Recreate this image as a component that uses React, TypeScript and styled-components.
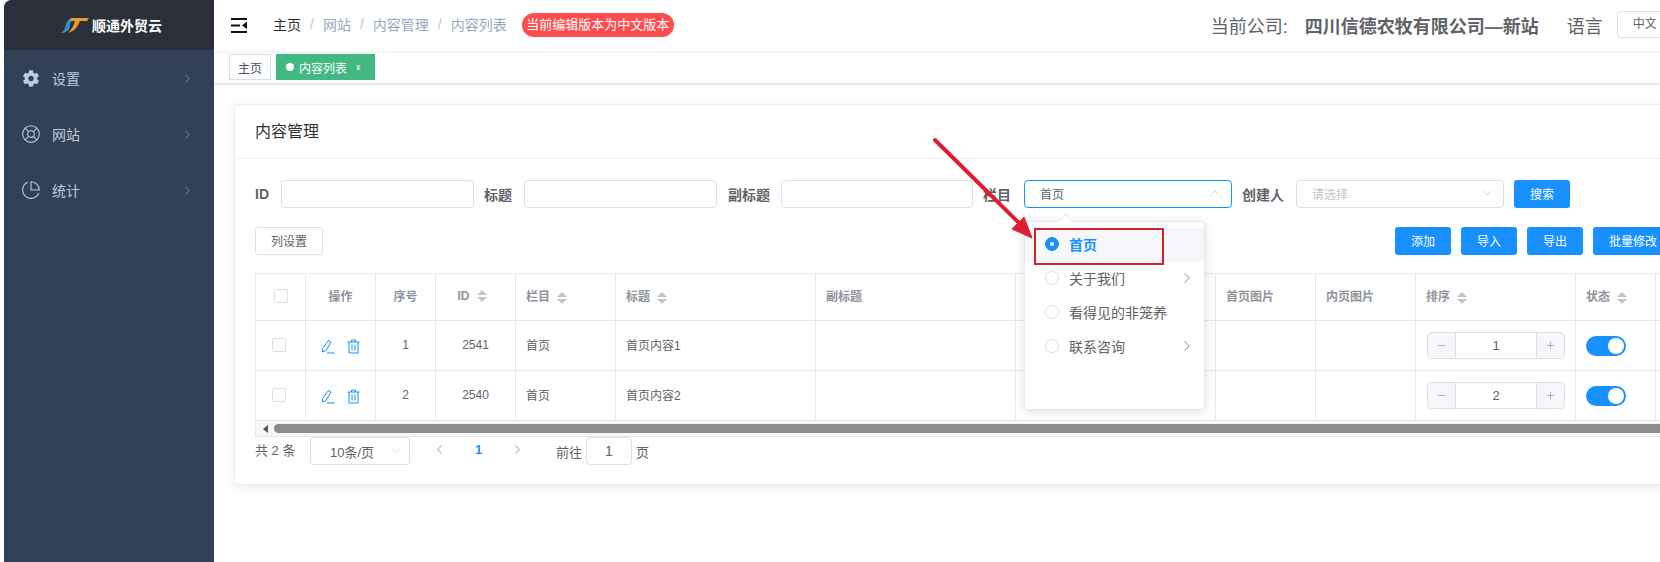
import styled, { createGlobalStyle } from "styled-components";
import { ChevronDown, ChevronRight, ChevronLeft, ChevronUp, LifeBuoy, Minus, Plus } from "lucide-react";
import { FaCog } from "react-icons/fa";
import { FiPieChart } from "react-icons/fi";

const GlobalStyle = createGlobalStyle`
	html, body {
		margin: 0;
		width: 1660px;
		height: 562px;
		overflow: hidden;
		background: #fff;
		font-family: "Liberation Sans", "Noto Sans CJK SC", sans-serif;
		color: #606266;
	}
	* { box-sizing: border-box; }
`;

const Page = styled.div`
	position: relative;
	display: flex;
	width: 1660px;
	height: 562px;
	padding-left: 4px;
	overflow: hidden;
`;

const Sidebar = styled.aside`
	flex: 0 0 210px;
	background: #304156;
	border-top-left-radius: 8px;
	overflow: hidden;
`;
const Brand = styled.div`
	height: 50px;
	background: #2b2f3a;
	display: flex;
	align-items: center;
	padding-left: 56px;
	gap: 3px;
	color: #fff;
	font-size: 14px;
	font-weight: 700;
`;
const Menu = styled.nav`
	padding-top: 0;
`;
const MenuItem = styled.div`
	height: 56px;
	display: flex;
	align-items: center;
	padding-left: 17px;
	padding-right: 20px;
	color: #bfcbd9;
	font-size: 14px;
	gap: 11px;
	svg:first-child {
		flex: 0 0 20px;
	}
	span {
		flex: 1;
	}
`;

const Main = styled.main`
	flex: 0 0 1446px;
	overflow: hidden;
`;
const TopNav = styled.header`
	height: 50px;
	display: flex;
	align-items: center;
	padding-left: 17px;
	white-space: nowrap;
	> * {
		flex-shrink: 0;
	}
`;
const Breadcrumbs = styled.div`
	display: flex;
	align-items: center;
	margin-left: 25px;
	padding-bottom: 2px;
	font-size: 14px;
	color: #97a8be;
`;
const CrumbHome = styled.span`
	color: #303133;
`;
const CrumbSep = styled.span`
	color: #c0c4cc;
	margin: 0 9px;
`;
const VersionBadge = styled.span`
	margin-left: 15px;
	height: 24px;
	width: 152px;
	border-radius: 12px;
	background: #ff4d4f;
	color: #fff;
	font-size: 13px;
	line-height: 23px;
	text-align: center;
`;
const Company = styled.div`
	margin-left: 537px;
	display: flex;
	align-items: center;
	padding-bottom: 1px;
	font-size: 18px;
	color: #606266;
`;
const CompanyName = styled.strong`
	margin-left: 17px;
	margin-right: 28px;
`;
const LangSelect = styled.div`
	margin-left: 14px;
	width: 90px;
	height: 27px;
	border: 1px solid #dcdfe6;
	border-radius: 4px;
	font-size: 12px;
	line-height: 25px;
	padding-left: 15px;
`;

const TagBar = styled.div`
	margin-top: 2px;
	height: 31px;
	display: flex;
	align-items: flex-start;
	gap: 5px;
	padding: 1px 0 0 15px;
	box-shadow: 0 1px 3px rgba(0, 0, 0, 0.18);
	border-top: 1px solid #f4f4f4;
`;
const Tag = styled.div<{ $active?: boolean }>`
	height: 26px;
	display: flex;
	align-items: center;
	padding: 0 ${(p) => (p.$active ? "13px 0 9px" : "8px")};
	font-size: 12px;
	border: 1px solid ${(p) => (p.$active ? "#42b983" : "#d8dce5")};
	background: ${(p) => (p.$active ? "#42b983" : "#fff")};
	color: ${(p) => (p.$active ? "#fff" : "#495060")};
`;
const TagDot = styled.i`
	width: 8px;
	height: 8px;
	border-radius: 50%;
	background: #fff;
	margin-right: 5px;
`;
const TagClose = styled.span`
	margin-left: 9px;
	font-size: 9px;
`;

const Card = styled.section`
	margin: 21px 0 0 20px;
	width: 1460px;
	height: 381px;
	background: #fff;
	border: 1px solid #ebeef5;
	border-radius: 4px;
	box-shadow: 0 2px 12px rgba(0, 0, 0, 0.08);
`;
const CardHeader = styled.div`
	height: 54px;
	padding: 0 0 3px 20px;
	display: flex;
	align-items: center;
	font-size: 16px;
	color: #303133;
	border-bottom: 1px solid #ebeef5;
`;
const CardBody = styled.div`
	padding: 21px 20px 0;
`;
const FilterRow = styled.div`
	display: flex;
	align-items: center;
	height: 28px;
`;
const FieldLabel = styled.label<{ $gap: number; $before?: number }>`
	font-size: 14px;
	font-weight: 700;
	color: #606266;
	margin-left: ${(p) => p.$before ?? 0}px;
	margin-right: ${(p) => p.$gap}px;
	white-space: nowrap;
`;
const TextInput = styled.div<{ $width: number; $gap: number }>`
	width: ${(p) => p.$width}px;
	height: 28px;
	margin-right: ${(p) => p.$gap}px;
	border: 1px solid #dcdfe6;
	border-radius: 4px;
	background: #fff;
`;
const SelectBox = styled.div<{ $width: number; $open?: boolean }>`
	position: relative;
	width: ${(p) => p.$width}px;
	height: 28px;
	display: flex;
	align-items: center;
	justify-content: space-between;
	padding: 0 8px 2px 15px;
	border: 1px solid ${(p) => (p.$open ? "#1890ff" : "#dcdfe6")};
	border-radius: 4px;
	font-size: 12px;
	color: ${(p) => (p.$open ? "#606266" : "#c0c4cc")};
	svg {
		color: #c0c4cc;
	}
`;
const PrimaryButton = styled.button<{ $width?: number; $before?: number }>`
	width: ${(p) => p.$width ?? 56}px;
	height: 28px;
	flex-shrink: 0;
	margin-left: ${(p) => p.$before ?? 0}px;
	padding: 0 0 2px;
	border: 0;
	border-radius: 3px;
	background: #1890ff;
	color: #fff;
	font-family: inherit;
	font-size: 12px;
`;
const ToolRow = styled.div`
	display: flex;
	justify-content: space-between;
	margin-top: 19px;
`;
const PlainButton = styled.button`
	width: 68px;
	height: 28px;
	padding: 0 0 2px;
	border: 1px solid #dcdfe6;
	border-radius: 3px;
	background: #fff;
	color: #606266;
	font-family: inherit;
	font-size: 12px;
`;
const ButtonGroup = styled.div`
	display: flex;
	gap: 10px;
`;

const TableWrap = styled.div`
	margin-top: 18px;
`;
const Table = styled.table`
	width: 100%;
	table-layout: fixed;
	border-collapse: collapse;
	font-size: 12px;
	border: 1px solid #e4e7ed;
	color: #606266;
`;
const Th = styled.th<{ $center?: boolean; $shift?: boolean }>`
	height: 47px;
	padding: 0 ${(p) => (p.$shift ? "17px" : "10px")} 3px 10px;
	border: 1px solid #e6e8ee;
	color: #909399;
	font-weight: 700;
	text-align: ${(p) => (p.$center ? "center" : "left")};
	white-space: nowrap;
`;
const Td = styled.td<{ $center?: boolean }>`
	height: 50px;
	padding: 0 10px 2px;
	border: 1px solid #e6e8ee;
	text-align: ${(p) => (p.$center ? "center" : "left")};
	white-space: nowrap;
`;
const CheckBox = styled.span<{ $nudge?: number }>`
	display: inline-block;
	width: 14px;
	height: 14px;
	vertical-align: middle;
	border: 1px solid #dcdfe6;
	border-radius: 2px;
	margin-right: ${(p) => p.$nudge ?? 0}px;
`;
const SortCaret = styled.span`
	display: inline-flex;
	flex-direction: column;
	gap: 2px;
	margin-left: 7px;
	vertical-align: middle;
	&::before,
	&::after {
		content: "";
		width: 0;
		height: 0;
		border-left: 5px solid transparent;
		border-right: 5px solid transparent;
	}
	&::before {
		border-bottom: 5px solid #c0c4cc;
	}
	&::after {
		border-top: 5px solid #c0c4cc;
	}
`;
const ActionIcons = styled.div`
	display: flex;
	justify-content: center;
	gap: 12px;
	padding-top: 4px;
`;
const Stepper = styled.div`
	width: 138px;
	height: 27px;
	display: flex;
	border: 1px solid #dcdfe6;
	border-radius: 4px;
	overflow: hidden;
	margin: 2px 0 0 1px;
`;
const StepButton = styled.div`
	flex: 0 0 28px;
	display: flex;
	align-items: center;
	justify-content: center;
	background: #f5f7fa;
	color: #606266;
	&:first-child {
		border-right: 1px solid #dcdfe6;
	}
	&:last-child {
		border-left: 1px solid #dcdfe6;
	}
`;
const StepValue = styled.div`
	flex: 1;
	text-align: center;
	font-size: 13px;
	line-height: 25px;
`;
const Switch = styled.span`
	display: block;
	position: relative;
	width: 40px;
	height: 20px;
	margin-top: 2px;
	border-radius: 10px;
	background: #1890ff;
	&::after {
		content: "";
		position: absolute;
		right: 2px;
		top: 2px;
		width: 16px;
		height: 16px;
		border-radius: 50%;
		background: #fff;
	}
`;

const ScrollBar = styled.div`
	height: 16px;
	display: flex;
	align-items: center;
	padding-left: 7px;
	gap: 6px;
	background: #f7f7f7;
	border: 1px solid #e4e7ed;
	border-top: 0;
	border-right: 0;
`;
const ScrollArrow = styled.i`
	width: 0;
	height: 0;
	border-top: 4px solid transparent;
	border-bottom: 4px solid transparent;
	border-right: 5px solid #555;
`;
const ScrollThumb = styled.div`
	flex: 1;
	height: 9px;
	border-radius: 5px;
	background: #8c8c8c;
`;

const Pager = styled.div`
	display: flex;
	align-items: center;
	height: 28px;
	margin-top: 0;
	font-size: 13px;
	color: #606266;
`;
const PagerTotal = styled.span`
	width: 55px;
	margin-top: -4px;
`;
const PagerSelect = styled(SelectBox)`
	padding: 0 7px 0 19px;
	color: #606266;
	font-size: 13px;
`;
const PagerNav = styled.div`
	width: 146px;
	display: flex;
	align-items: center;
	justify-content: space-between;
	padding: 0 31px 0 22px;
	margin-top: -3px;
	color: #c0c4cc;
`;
const PagerCurrent = styled.b`
	color: #1890ff;
`;
const JumpInput = styled.div`
	width: 46px;
	height: 28px;
	margin: 0 4px;
	border: 1px solid #dcdfe6;
	border-radius: 4px;
	text-align: center;
	font-size: 14px;
	line-height: 26px;
`;

const Dropdown = styled.div`
	position: absolute;
	left: -1px;
	top: 40px;
	width: 181px;
	height: 189px;
	padding-top: 6px;
	background: #fff;
	border: 1px solid #e4e7ed;
	border-radius: 4px;
	box-shadow: 0 2px 12px rgba(0, 0, 0, 0.12);
	z-index: 2;
	&::before {
		content: "";
		position: absolute;
		left: 35px;
		top: -6px;
		width: 10px;
		height: 10px;
		background: #fff;
		border-left: 1px solid #e4e7ed;
		border-top: 1px solid #e4e7ed;
		transform: rotate(45deg);
	}
`;
const DropItem = styled.div<{ $active?: boolean }>`
	position: relative;
	height: 34px;
	display: flex;
	align-items: center;
	padding: 0 8px 2px 20px;
	font-size: 14px;
	font-weight: ${(p) => (p.$active ? 700 : 400)};
	color: ${(p) => (p.$active ? "#1890ff" : "#606266")};
	background: ${(p) => (p.$active ? "#f5f7fa" : "transparent")};
	svg {
		color: #606266;
	}
`;
const Radio = styled.i<{ $checked?: boolean }>`
	flex: 0 0 14px;
	height: 14px;
	margin-right: 10px;
	border-radius: 50%;
	background: ${(p) => (p.$checked ? "#1890ff" : "#fff")};
	border: 1px solid ${(p) => (p.$checked ? "#1890ff" : "#dcdfe6")};
	display: flex;
	align-items: center;
	justify-content: center;
	&::after {
		content: "";
		width: 4px;
		height: 4px;
		border-radius: 50%;
		background: ${(p) => (p.$checked ? "#fff" : "transparent")};
	}
`;
const DropLabel = styled.span`
	flex: 1;
`;
const RedBox = styled.div`
	position: absolute;
	left: 9px;
	top: 0;
	width: 130px;
	height: 37px;
	border: 2px solid #d2232a;
`;
const ArrowLayer = styled.svg`
	position: absolute;
	left: 920px;
	top: 130px;
	z-index: 3;
`;

function Logo() {
	return (
		<svg width="29" height="17" viewBox="0 0 29 17">
			<path d="M0 16C4 15 5 11 6 7C7 3 10 1 15 1L12 4C10 5 10 8 10 10C9 14 5 16 0 16Z" fill="#2f8fce" />
			<path d="M11 1H29L27 4H20C18 9 15 14 8 16C12 12 14 8 15 4H10Z" fill="#e89a26" />
		</svg>
	);
}

function CollapseIcon() {
	return (
		<svg width="17" height="15" viewBox="0 0 17 15">
			<path d="M0 1H16M0 7.5H9M0 14H16" stroke="#111" strokeWidth="2" />
			<path d="M16 3.5V11L11 7.5Z" fill="#111" />
		</svg>
	);
}

function EditIcon() {
	return (
		<svg width="14" height="15" viewBox="0 0 14 15" fill="none" stroke="#1890ff" strokeWidth="1">
			<path d="M7.5 1.5L10 3L5 11.5L1.5 13L1.5 9.5Z" />
			<path d="M6 14H13.5" />
		</svg>
	);
}

function TrashIcon() {
	return (
		<svg width="13" height="15" viewBox="0 0 13 15" fill="none" stroke="#1890ff" strokeWidth="1">
			<path d="M0.5 3H12.5M4.5 3V1H8.5V3M2 3V14H11V3M5 5.5V11.5M8 5.5V11.5" />
		</svg>
	);
}

const columns = [
	{ width: 50 },
	{ width: 70, title: "操作", center: true },
	{ width: 60, title: "序号", center: true },
	{ width: 80, title: "ID", center: true, sort: true },
	{ width: 100, title: "栏目", sort: true },
	{ width: 200, title: "标题", sort: true },
	{ width: 200, title: "副标题" },
	{ width: 200, title: "" },
	{ width: 100, title: "首页图片" },
	{ width: 100, title: "内页图片" },
	{ width: 160, title: "排序", sort: true },
	{ width: 80, title: "状态", sort: true },
	{ width: 18, title: "" },
];

const rows = [
	{ no: 1, id: 2541, title: "首页内容1" },
	{ no: 2, id: 2540, title: "首页内容2" },
];

const options = [
	{ name: "首页", active: true },
	{ name: "关于我们", more: true },
	{ name: "看得见的非笼养" },
	{ name: "联系咨询", more: true },
];

export default function App() {
	return (
		<Page>
			<GlobalStyle />
			<Sidebar>
				<Brand>
					<Logo />
					顺通外贸云
				</Brand>
				<Menu>
					<MenuItem>
						<FaCog size={17} />
						<span>设置</span>
						<ChevronRight size={13} strokeWidth={1} />
					</MenuItem>
					<MenuItem>
						<LifeBuoy size={20} strokeWidth={1.3} />
						<span>网站</span>
						<ChevronRight size={13} strokeWidth={1} />
					</MenuItem>
					<MenuItem>
						<FiPieChart size={20} strokeWidth={1.3} />
						<span>统计</span>
						<ChevronRight size={13} strokeWidth={1} />
					</MenuItem>
				</Menu>
			</Sidebar>
			<Main>
				<TopNav>
					<CollapseIcon />
					<Breadcrumbs>
						<CrumbHome>主页</CrumbHome>
						<CrumbSep>/</CrumbSep>
						网站
						<CrumbSep>/</CrumbSep>
						内容管理
						<CrumbSep>/</CrumbSep>
						内容列表
					</Breadcrumbs>
					<VersionBadge>当前编辑版本为中文版本</VersionBadge>
					<Company>
						当前公司:
						<CompanyName>四川信德农牧有限公司—新站</CompanyName>
						语言
						<LangSelect>中文</LangSelect>
					</Company>
				</TopNav>
				<TagBar>
					<Tag>主页</Tag>
					<Tag $active>
						<TagDot />
						内容列表
						<TagClose>x</TagClose>
					</Tag>
				</TagBar>
				<Card>
					<CardHeader>内容管理</CardHeader>
					<CardBody>
						<FilterRow>
							<FieldLabel $gap={12}>ID</FieldLabel>
							<TextInput $width={193} $gap={10} />
							<FieldLabel $gap={12}>标题</FieldLabel>
							<TextInput $width={193} $gap={11} />
							<FieldLabel $gap={11}>副标题</FieldLabel>
							<TextInput $width={192} $gap={10} />
							<FieldLabel $gap={13}>栏目</FieldLabel>
							<SelectBox $width={208} $open>
								首页
								<ChevronUp size={16} strokeWidth={1} />
								<Dropdown>
									{options.map((option) => (
										<DropItem key={option.name} $active={option.active}>
											<Radio $checked={option.active} />
											<DropLabel>{option.name}</DropLabel>
											{option.more && <ChevronRight size={18} strokeWidth={1} />}
											{option.active && <RedBox />}
										</DropItem>
									))}
								</Dropdown>
							</SelectBox>
							<FieldLabel $gap={12} $before={10}>
								创建人
							</FieldLabel>
							<SelectBox $width={208}>
								请选择
								<ChevronDown size={16} strokeWidth={1} />
							</SelectBox>
							<PrimaryButton $before={10}>搜索</PrimaryButton>
						</FilterRow>
						<ToolRow>
							<PlainButton>列设置</PlainButton>
							<ButtonGroup>
								<PrimaryButton>添加</PrimaryButton>
								<PrimaryButton>导入</PrimaryButton>
								<PrimaryButton>导出</PrimaryButton>
								<PrimaryButton $width={80}>批量修改</PrimaryButton>
							</ButtonGroup>
						</ToolRow>
						<TableWrap>
							<Table>
								<colgroup>
									{columns.map((col, i) => (
										<col key={i} width={col.width} />
									))}
								</colgroup>
								<thead>
									<tr>
										{columns.map((col, i) => (
											<Th key={i} $center={col.center ?? i === 0} $shift={col.center && col.sort}>
												{i === 0 ? <CheckBox /> : col.title}
												{col.sort && <SortCaret />}
											</Th>
										))}
									</tr>
								</thead>
								<tbody>
									{rows.map((row) => (
										<tr key={row.id}>
											<Td $center>
												<CheckBox $nudge={4} />
											</Td>
											<Td $center>
												<ActionIcons>
													<EditIcon />
													<TrashIcon />
												</ActionIcons>
											</Td>
											<Td $center>{row.no}</Td>
											<Td $center>{row.id}</Td>
											<Td>首页</Td>
											<Td>{row.title}</Td>
											<Td />
											<Td />
											<Td />
											<Td />
											<Td>
												<Stepper>
													<StepButton>
														<Minus size={11} strokeWidth={1} />
													</StepButton>
													<StepValue>{row.no}</StepValue>
													<StepButton>
														<Plus size={11} strokeWidth={1} />
													</StepButton>
												</Stepper>
											</Td>
											<Td>
												<Switch />
											</Td>
											<Td />
										</tr>
									))}
								</tbody>
							</Table>
							<ScrollBar>
								<ScrollArrow />
								<ScrollThumb />
							</ScrollBar>
						</TableWrap>
						<Pager>
							<PagerTotal>共 2 条</PagerTotal>
							<PagerSelect $width={100} $open={false}>
								10条/页
								<ChevronDown size={13} strokeWidth={1} />
							</PagerSelect>
							<PagerNav>
								<ChevronLeft size={15} />
								<PagerCurrent>1</PagerCurrent>
								<ChevronRight size={15} />
							</PagerNav>
							前往
							<JumpInput>1</JumpInput>
							页
						</Pager>
					</CardBody>
				</Card>
			</Main>
			<ArrowLayer width="130" height="120" viewBox="0 0 130 120">
				<path d="M15 10L100 94" stroke="#dc1f2e" strokeWidth="4" strokeLinecap="round" />
				<path d="M112 108L92 99L104 87Z" fill="#dc1f2e" stroke="#dc1f2e" strokeWidth="1" />
			</ArrowLayer>
		</Page>
	);
}
